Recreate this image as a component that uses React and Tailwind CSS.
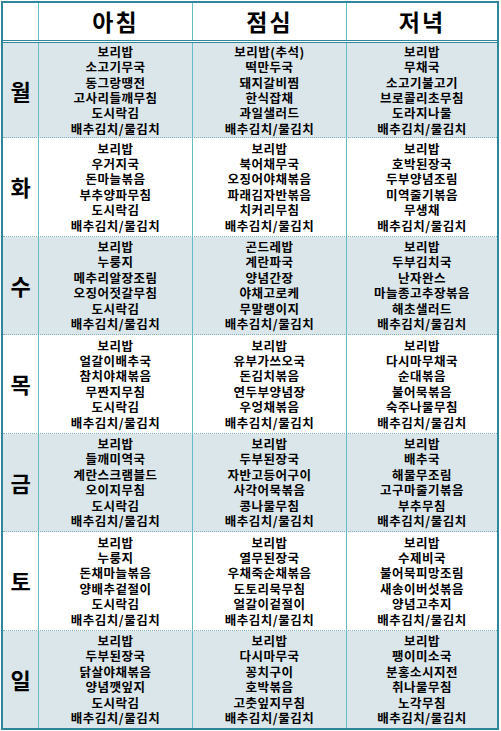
const days = [
  {
    day: "월",
    meals: [
      ["보리밥", "소고기무국", "동그랑땡전", "고사리들깨무침", "도시락김", "배추김치/물김치"],
      ["보리밥(추석)", "떡만두국", "돼지갈비찜", "한식잡채", "과일샐러드", "배추김치/물김치"],
      ["보리밥", "무채국", "소고기불고기", "브로콜리초무침", "도라지나물", "배추김치/물김치"],
    ],
  },
  {
    day: "화",
    meals: [
      ["보리밥", "우거지국", "돈마늘볶음", "부추양파무침", "도시락김", "배추김치/물김치"],
      ["보리밥", "북어채무국", "오징어야채볶음", "파래김자반볶음", "치커리무침", "배추김치/물김치"],
      ["보리밥", "호박된장국", "두부양념조림", "미역줄기볶음", "무생채", "배추김치/물김치"],
    ],
  },
  {
    day: "수",
    meals: [
      ["보리밥", "누룽지", "메추리알장조림", "오징어젓갈무침", "도시락김", "배추김치/물김치"],
      ["곤드레밥", "계란파국", "양념간장", "야채고로케", "무말랭이지", "배추김치/물김치"],
      ["보리밥", "두부김치국", "난자완스", "마늘종고추장볶음", "해초샐러드", "배추김치/물김치"],
    ],
  },
  {
    day: "목",
    meals: [
      ["보리밥", "얼갈이배추국", "참치야채볶음", "무짠지무침", "도시락김", "배추김치/물김치"],
      ["보리밥", "유부가쓰오국", "돈김치볶음", "연두부양념장", "우엉채볶음", "배추김치/물김치"],
      ["보리밥", "다시마무채국", "순대볶음", "불어묵볶음", "숙주나물무침", "배추김치/물김치"],
    ],
  },
  {
    day: "금",
    meals: [
      ["보리밥", "들깨미역국", "계란스크램블드", "오이지무침", "도시락김", "배추김치/물김치"],
      ["보리밥", "두부된장국", "자반고등어구이", "사각어묵볶음", "콩나물무침", "배추김치/물김치"],
      ["보리밥", "배추국", "해물무조림", "고구마줄기볶음", "부추무침", "배추김치/물김치"],
    ],
  },
  {
    day: "토",
    meals: [
      ["보리밥", "누룽지", "돈채마늘볶음", "양배추겉절이", "도시락김", "배추김치/물김치"],
      ["보리밥", "열무된장국", "우채죽순채볶음", "도토리묵무침", "얼갈이겉절이", "배추김치/물김치"],
      ["보리밥", "수제비국", "불어묵피망조림", "새송이버섯볶음", "양념고추지", "배추김치/물김치"],
    ],
  },
  {
    day: "일",
    meals: [
      ["보리밥", "두부된장국", "닭살야채볶음", "양념깻잎지", "도시락김", "배추김치/물김치"],
      ["보리밥", "다시마무국", "꽁치구이", "호박볶음", "고춧잎지무침", "배추김치/물김치"],
      ["보리밥", "팽이미소국", "분홍소시지전", "취나물무침", "노각무침", "배추김치/물김치"],
    ],
  },
];

const font = { fontFamily: '"Noto Sans CJK KR", "Noto Sans", sans-serif' };

export default function App() {
  return (
    <div className="w-[501px] h-[731px] bg-white pt-[1px] pl-[1px]" style={font}>
      <div className="w-[498px] h-[729px] border-2 border-[#31869a] flex flex-col text-black">
        {/* header */}
        <div className="grid grid-cols-[35px_154px_154px_1fr] h-[40px] shrink-0 border-b-[3px] border-double border-[#31869a] bg-white">
          <div />
          {["아침", "점심", "저녁"].map((h) => (
            <div
              key={h}
              className="border-l border-[#62bdc8] flex items-center justify-center text-[23px] font-bold tracking-[2px]"
            >
              {h}
            </div>
          ))}
        </div>

        {/* rows */}
        {days.map((d, i) => (
          <div
            key={d.day}
            className={`grid grid-cols-[35px_154px_154px_1fr] ${
              i === 0 ? "h-[95px] shrink-0" : "flex-1"
            } ${i % 2 === 0 ? "bg-[#dae6e9]" : "bg-white"} ${
              i < days.length - 1 ? "border-b border-dotted border-[#7fb3bd]" : ""
            }`}
          >
            <div className="flex items-center justify-center text-[22px] font-bold">{d.day}</div>
            {d.meals.map((items, j) => (
              <div
                key={j}
                className="border-l border-[#62bdc8] flex flex-col items-center justify-center text-[12.5px] font-bold leading-[15.4px] tracking-[0.5px]"
              >
                {items.map((t, k) => (
                  <div key={k}>{t}</div>
                ))}
              </div>
            ))}
          </div>
        ))}
      </div>
    </div>
  );
}
